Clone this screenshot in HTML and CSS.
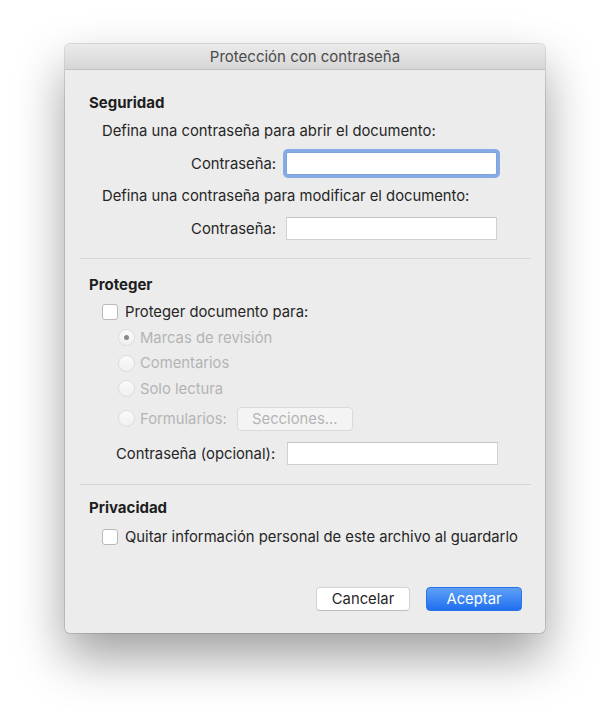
FILE: index.html
```html
<!DOCTYPE html>
<html lang="es">
<head>
    <meta charset="UTF-8">
    <title>Protección con contraseña</title>
    <link rel="stylesheet" href="styles.css">
</head>
<body>
    <div class="window">
        <div class="titlebar">Protección con contraseña</div>

        <div class="content">
            <!-- Seguridad -->
            <div class="section first">
                <h2>Seguridad</h2>
                <p class="hint">Defina una contraseña para abrir el documento:</p>
                <div class="field">
                    <label>Contraseña:</label>
                    <div class="input focused"></div>
                </div>
                <p class="hint">Defina una contraseña para modificar el documento:</p>
                <div class="field">
                    <label>Contraseña:</label>
                    <div class="input"></div>
                </div>
            </div>

            <hr>

            <!-- Proteger -->
            <div class="section">
                <h2>Proteger</h2>
                <div class="check"><span class="box"></span>Proteger documento para:</div>
                <div class="radios">
                    <div class="radio"><span class="dot on"></span>Marcas de revisión</div>
                    <div class="radio"><span class="dot"></span>Comentarios</div>
                    <div class="radio"><span class="dot"></span>Solo lectura</div>
                    <div class="radio forms"><span class="dot"></span>Formularios:<span class="btn disabled">Secciones...</span></div>
                </div>
                <div class="field opt">
                    <label>Contraseña (opcional):</label>
                    <div class="input"></div>
                </div>
            </div>

            <hr class="second">

            <!-- Privacidad -->
            <div class="section last">
                <h2>Privacidad</h2>
                <div class="check"><span class="box"></span>Quitar información personal de este archivo al guardarlo</div>
            </div>

            <div class="actions">
                <span class="btn">Cancelar</span>
                <span class="btn primary">Aceptar</span>
            </div>
        </div>
    </div>
</body>
</html>
```

FILE: styles.css
```css
body {
    margin: 0;
    min-height: 720px;
    background: #fff;
    font-family: Inter, "Liberation Sans", sans-serif;
    font-size: 14.8px;
    color: #262626;
}

/* The dialog */
.window {
    width: 480px;
    height: 589px;
    margin: 44px 0 0 65px;
    background: #ececec;
    border-radius: 5px;
    box-shadow: 0 0 0 1px rgba(0, 0, 0, 0.12), 0 24px 50px rgba(0, 0, 0, 0.38);
    overflow: hidden;
    display: flex;
    flex-direction: column;
}

.titlebar {
    height: 25px;
    line-height: 26px;
    text-align: center;
    font-size: 15px;
    color: #4a4a4a;
    background: linear-gradient(#ebebeb, #d6d6d6);
    border-bottom: 1px solid #c2c2c2;
}

.content {
    flex: 1;
    padding: 0 14px 0 24px;
    display: flex;
    flex-direction: column;
}

.section {
    padding-top: 16px;
}

.section.first {
    padding-top: 23px;
}

.section.last {
    padding-top: 13px;
}

h2 {
    margin: 0;
    font-size: 15px;
    font-weight: bold;
    line-height: 20px;
    color: #1e1e1e;
}

.hint {
    margin: 8px 0 9px 13px;
    line-height: 20px;
}

.field {
    display: flex;
    align-items: center;
    height: 27px;
}

.field + .hint {
    margin-top: 9px;
}

.field label {
    width: 187px;
    text-align: right;
    margin-right: 10px;
}

.input {
    width: 209px;
    height: 21px;
    background: #fff;
    border: 1px solid #d0d0d0;
    border-top-color: #c4c4c4;
}

.input.focused {
    border: 1px solid #7fa3dc;
    box-shadow: 0 0 0 3px #86aae6;
    border-radius: 2px;
}

hr {
    border: 0;
    border-top: 1px solid #d6d6d6;
    margin: 16px 0 0 -9px;
    width: 451px;
}

hr.second {
    margin-top: 18px;
}

/* Checkboxes and radio buttons */
.check {
    display: flex;
    align-items: center;
    margin: 7px 0 0 13px;
    line-height: 20px;
}

.section.last .check {
    margin-top: 9px;
}

.box {
    width: 14px;
    height: 14px;
    margin-right: 7px;
    background: #fff;
    border: 1px solid #b9b9b9;
    border-radius: 3px;
}

.radios {
    margin: 3px 0 0 29px;
    color: #b4b4b4;
}

.radio {
    display: flex;
    align-items: center;
    height: 25.5px;
}

.dot {
    width: 15px;
    height: 15px;
    margin-right: 5px;
    border: 1px solid #dcdcdc;
    border-radius: 50%;
    background: linear-gradient(#fafafa, #f0f0f0);
    display: flex;
    align-items: center;
    justify-content: center;
}

.dot.on::after {
    content: "";
    width: 5px;
    height: 5px;
    border-radius: 50%;
    background: #8a8a8a;
}

.radio.forms {
    height: 34px;
}

/* Buttons */
.btn {
    display: inline-block;
    height: 22px;
    line-height: 22px;
    padding: 0 14px;
    text-align: center;
    background: #fff;
    border: 1px solid #d2d2d2;
    border-bottom-color: #bdbdbd;
    border-radius: 4px;
    color: #262626;
}

.btn.disabled {
    margin-left: 10px;
    width: 86px;
    color: #b4b4b4;
    background: #f4f4f4;
    border-color: #dadada;
}

.field.opt {
    margin-top: 6px;
    height: 24px;
}

.field.opt label {
    width: 171px;
    text-align: left;
    margin-left: 27px;
    margin-right: 0;
}

.actions {
    margin-top: auto;
    margin-bottom: 22px;
    display: flex;
    justify-content: flex-end;
    gap: 16px;
    padding-right: 9px;
}

.actions .btn {
    width: 64px;
}

.btn.primary {
    width: 66px;
    color: #fff;
    background: linear-gradient(#5fa0f7, #1f6fef);
    border: 1px solid #2a73e6;
}
```
